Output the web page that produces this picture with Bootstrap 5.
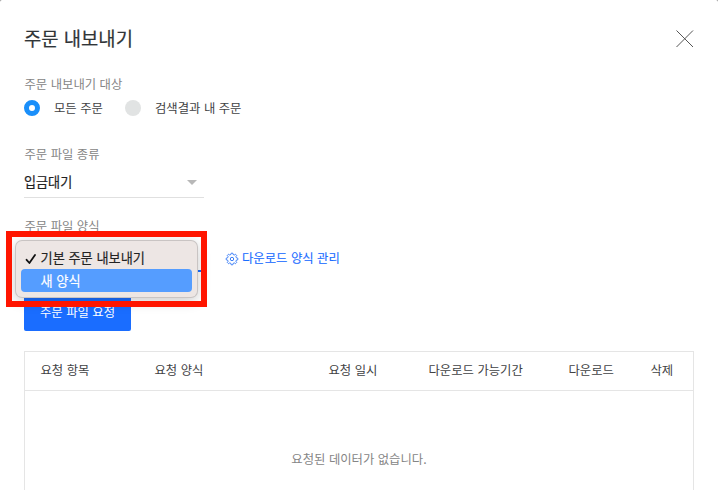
<!DOCTYPE html>
<html lang="ko">
<head>
<meta charset="utf-8">
<meta name="viewport" content="width=device-width, initial-scale=1">
<title>주문 내보내기</title>
<link href="https://cdn.jsdelivr.net/npm/bootstrap@5.3.0/dist/css/bootstrap.min.css" rel="stylesheet">
<style>
body{font-family:"Noto Sans CJK KR","Noto Sans",sans-serif;font-size:12.35px;line-height:20px;color:#3f4244;background:#8a8a8a;overflow:hidden}
.export-dialog{height:490px;padding:24px 24px 0 24px;overflow:hidden;background:#fff;border-radius:2px 2px 0 0}
.dialog-title{font-size:18.8px;line-height:28px;padding-bottom:2px;color:#303538;font-weight:400;-webkit-text-stroke:.2px #303538}
.close-btn{width:18px;height:18px}
.target-field{margin-top:20px}
.kind-field{margin-top:26px}
.form-field{margin-top:18px}
.field-label{color:#858585;padding-left:.5px}
.radio-dot{width:16px;height:16px;border-radius:50%;background:#e1e3e3;flex:none}
.radio-dot.checked{background:#fff;border:5px solid #1a8ffa}
.radio-text{margin-left:14px}
.radio-text.first{width:71px}
.pick{width:180px;height:30px;border-bottom:1px solid #e0e0e0;font-size:13.1px;color:#222}
.pick-value{padding-bottom:1px;-webkit-text-stroke:.2px #222}
.pick-active{height:31px;border-bottom:2px solid #1a6dff}
.caret{margin-right:7px}
.form-line{margin-top:5px}
.manage-link{color:#1a6dff;margin-left:21px;gap:3px;height:35px}
.manage-link span{padding-bottom:1px;-webkit-text-stroke:.1px #1a6dff}
.request-btn{width:107px;height:36px;margin-top:19px;margin-bottom:20px;background:#1a6dff;border-radius:2px;font-size:12.35px;line-height:20px;color:#fff}
.request-btn span{padding-bottom:2px}
.red-frame{left:6px;top:231px;width:201px;height:76px;border:6px solid #ff1500;z-index:5}
.option-menu{left:16px;top:241px;width:181px;height:56px;border-radius:6px;background:#ede6e4;box-shadow:0 0 0 1px #c9c4c3,0 3px 14px rgba(0,0,0,.24);z-index:4;padding:5px;font-size:13.2px;line-height:23px;color:#232323}
.option-row{height:23px;padding-left:19.5px;-webkit-text-stroke:.15px currentColor}
.option-row.active-option{background:#559dff;color:#fff;border-radius:4px}
.tick{left:9px;top:12px}
.request-table{border:1px solid #e5e5e5;height:160px;width:670px}
.head-row{height:39px;border-bottom:1px solid #e5e5e5;display:grid;grid-template-columns:114px 174px 100px 140px 82px 1fr;padding-left:15.5px;padding-bottom:2px}
.empty-text{color:#858585;padding-top:58px}
</style>
</head>
<body>
<main class="export-dialog position-relative">
  <header class="d-flex justify-content-between align-items-center">
    <h1 class="dialog-title mb-0">주문 내보내기</h1>
    <button type="button" class="close-btn border-0 bg-transparent p-0 d-flex" aria-label="닫기">
      <svg width="18" height="18" viewBox="0 0 18 18" fill="none" stroke="#555" stroke-width="1"><path d="M.5.5l16.5 16.5M17 .5.5 17"/></svg>
    </button>
  </header>

  <section class="target-field">
    <div class="field-label">주문 내보내기 대상</div>
    <div class="d-flex align-items-center mt-1">
      <span class="radio-dot checked"></span><span class="radio-text first">모든 주문</span>
      <span class="radio-dot"></span><span class="radio-text">검색결과 내 주문</span>
    </div>
  </section>

  <section class="kind-field">
    <div class="field-label">주문 파일 종류</div>
    <div class="pick d-flex justify-content-between align-items-center mt-1">
      <span class="pick-value">입금대기</span>
      <svg class="caret" width="10" height="5" viewBox="0 0 10 5"><path d="M0 0h10L5 5z" fill="#b8b8b8"/></svg>
    </div>
  </section>

  <section class="form-field">
    <div class="field-label">주문 파일 양식</div>
    <div class="form-line d-flex">
      <div class="pick pick-active"></div>
      <a href="#" class="manage-link d-flex align-items-center text-decoration-none">
        <svg width="14" height="14" viewBox="0 0 14 14" fill="none" stroke="#3d7ff7" stroke-width="1" stroke-linejoin="round"><path d="M5.9 2.5 6.2 1.2h1.6l.3 1.3 1.2.5 1.1-.8 1.3 1.3-.8 1.1.5 1.2 1.4.4v1.6l-1.4.3-.5 1.2.8 1.1-1.3 1.3-1.1-.8-1.2.5-.3 1.4H6.2l-.3-1.4-1.2-.5-1.1.8-1.3-1.3.8-1.1-.5-1.2-1.4-.3V6.2l1.4-.4.5-1.2-.8-1.1 1.3-1.3 1.1.8z"/><circle cx="7" cy="7" r="1.7"/></svg>
        <span>다운로드 양식 관리</span>
      </a>
    </div>
  </section>

  <button type="button" class="request-btn btn border-0 d-flex align-items-center justify-content-center p-0"><span>주문 파일 요청</span></button>

  <section class="request-table">
    <div class="head-row align-items-center">
      <span>요청 항목</span><span>요청 양식</span><span>요청 일시</span><span>다운로드 가능기간</span><span>다운로드</span><span>삭제</span>
    </div>
    <div class="empty-text text-center">요청된 데이터가 없습니다.</div>
  </section>

  <div class="option-menu position-absolute" role="listbox">
    <svg class="tick position-absolute" width="12" height="12" viewBox="0 0 12 12" fill="none" stroke="#111" stroke-width="1.8" stroke-linecap="round" stroke-linejoin="round"><path d="M1.6 6.8 4.4 10 10 2"/></svg>
    <div class="option-row" role="option">기본 주문 내보내기</div>
    <div class="option-row active-option" role="option">새 양식</div>
  </div>
  <div class="red-frame position-absolute"></div>
</main>
<script src="https://cdn.jsdelivr.net/npm/bootstrap@5.3.0/dist/js/bootstrap.bundle.min.js"></script>
</body>
</html>
